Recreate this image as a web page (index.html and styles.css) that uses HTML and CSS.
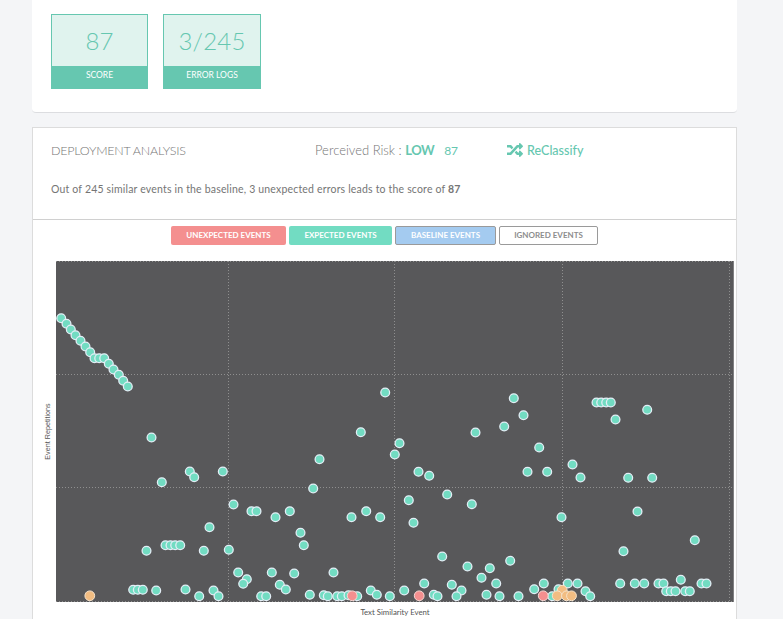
FILE: index.html
```html
<!DOCTYPE html>
<html>

<head>
<meta charset="utf-8">
<meta name="viewport" content="width=device-width, initial-scale=1">

<title>Deployment Analysis</title>

<link rel="stylesheet" href="styles.css">
</head>

<body>

	<div class="card top-card">
		<div class="tile">
			<div class="tile-value">87</div>
			<div class="tile-label">SCORE</div>
		</div>
		<div class="tile tile-wide">
			<div class="tile-value">3/245</div>
			<div class="tile-label">ERROR LOGS</div>
		</div>
	</div>

	<div class="card analysis">
		<div class="analysis-head">
			<div class="head-row">
				<span class="head-title">DEPLOYMENT ANALYSIS</span>
				<span class="head-risk">Perceived Risk : <b>LOW</b><span class="risk-num">87</span></span>
				<span class="head-action">
					<svg class="shuffle" viewBox="0 0 512 512"><path d="M504.971 359.029c9.373 9.373 9.373 24.569 0 33.941l-80 79.984c-15.01 15.01-40.971 4.49-40.971-16.971V416h-58.785a12.004 12.004 0 0 1-8.773-3.812l-70.556-75.596 53.333-57.143L352 336h32v-39.981c0-21.438 25.943-31.998 40.971-16.971l80 79.981zM12 176h84l52.781 56.551 53.333-57.143-70.556-75.596A11.999 11.999 0 0 0 122.785 96H12c-6.627 0-12 5.373-12 12v56c0 6.627 5.373 12 12 12zm372 0v39.984c0 21.46 25.961 31.98 40.971 16.971l80-79.984c9.373-9.373 9.373-24.569 0-33.941l-80-79.981C409.943 24.021 384 34.582 384 56.019V96h-58.785a12.004 12.004 0 0 0-8.773 3.812L96 336H12c-6.627 0-12 5.373-12 12v56c0 6.627 5.373 12 12 12h110.785c3.326 0 6.503-1.381 8.773-3.812L352 176h32z"/></svg>
					ReClassify
				</span>
			</div>
			<p class="summary">Out of 245 similar events in the baseline, 3 unexpected errors leads to the score of <b>87</b></p>
		</div>

		<div class="legend">
			<span class="pill pill-red">UNEXPECTED EVENTS</span>
			<span class="pill pill-green">EXPECTED EVENTS</span>
			<span class="pill pill-blue">BASELINE EVENTS</span>
			<span class="pill pill-white">IGNORED EVENTS</span>
		</div>

		<div class="chart">
			<div class="y-label"><span>Event Repetitions</span></div>
			<div class="plot-wrap">
				<svg class="plot" width="678" height="341" viewBox="56 261 678 341">
					<rect class="plot-bg" x="56" y="261" width="678" height="341"/>
					<path class="grid" d="M56 261.5H734M56 374.5H734M56 487.5H734M56 601.5H734M228.5 261V602M394.5 261V602M562.5 261V602M729.5 261V602"/>
					<path class="plot-edge" d="M733.5 261V602"/>
					<g id="dots" transform="translate(0.5 0.5)"></g>
				</svg>
				<div class="x-label">Text Similarity Event</div>
			</div>
		</div>
	</div>

	<script src="dots.js"></script>

</body>
</html>
```

FILE: styles.css
```css
* {
	box-sizing: border-box;
}

html, body {
	height: 619px;
	overflow: hidden;
}

body {
	margin: 0;
	padding: 0 46px 0 32px;
	background-color: #f4f5f7;
	font-family: "Lato", "Open Sans", sans-serif;
	color: #757575;
}

.card {
	background-color: #fff;
}

.top-card {
	display: flex;
	gap: 15px;
	height: 113px;
	padding: 14px 19px 0 19px;
	border-bottom: 1px solid #dcdde0;
	border-radius: 0 0 4px 4px;
}

.tile {
	width: 97px;
	height: 75px;
	text-align: center;
	border: 1px solid #66c7b0;
}

.tile-wide {
	width: 98px;
}

.tile-value {
	height: 51px;
	padding-top: 11px;
	background-color: #e0f3ee;
	color: #66c7b0;
	font-size: 24px;
	font-weight: 300;
	letter-spacing: 0.2px;
}

.tile-label {
	height: 23px;
	line-height: 18px;
	background-color: #66c7b0;
	color: #fff;
	font-size: 8.5px;
}

.analysis {
	margin-top: 14px;
	height: 492px;
	border: 1px solid #dcdcdc;
	border-bottom: 0;
}

.analysis-head {
	height: 92px;
	padding: 13px 18px 0 18px;
	border-bottom: 1px solid #d0d0d0;
}

.head-row {
	display: flex;
	align-items: center;
	height: 18px;
	font-size: 13px;
}

.head-title {
	width: 264px;
	font-size: 12.5px;
	font-weight: 300;
	letter-spacing: -0.25px;
}

.head-risk {
	width: 192px;
	font-weight: 300;
}

.head-risk b {
	color: #66c7b0;
	font-weight: 700;
	letter-spacing: -0.5px;
}

.risk-num {
	margin-left: 10px;
	color: #66c7b0;
	font-size: 12px;
	font-weight: 400;
}

.head-action {
	display: flex;
	align-items: center;
	gap: 4px;
	color: #66c7b0;
	font-size: 12.5px;
	font-weight: 500;
}

.shuffle {
	width: 16px;
	height: 16px;
	fill: #66c7b0;
}

.summary {
	margin: 24px 0 0 0;
	font-size: 10.5px;
	letter-spacing: 0.18px;
}

.legend {
	display: flex;
	justify-content: center;
	gap: 3px;
	padding: 6px 0 0 0;
}

.pill {
	height: 19px;
	line-height: 19px;
	text-align: center;
	font-size: 8px;
	font-weight: 700;
	color: #fff;
	border-radius: 2px;
}

.pill-red {
	width: 115px;
	background-color: #f48f8f;
}

.pill-green {
	width: 103px;
	background-color: #72dcc2;
}

.pill-blue {
	width: 101px;
	line-height: 17px;
	background-color: #a4cbf0;
	border: 1px solid #9a9a9a;
}

.pill-white {
	width: 99px;
	line-height: 17px;
	background-color: #fff;
	color: #8d8d8d;
	border: 1px solid #9a9a9a;
}

.chart {
	display: flex;
	margin-top: 16px;
}

.y-label {
	display: flex;
	align-items: center;
	justify-content: center;
	width: 23px;
	height: 341px;
	padding-left: 6px;
}

.y-label span {
	transform: rotate(-90deg);
	white-space: nowrap;
	font-family: "Liberation Sans", sans-serif;
	font-size: 7.2px;
	color: #555;
}

.plot {
	display: block;
}

.plot-bg {
	fill: #58585a;
}

.grid {
	fill: none;
	stroke: #8f8f8f;
	stroke-width: 1;
	stroke-dasharray: 1 2;
}

.plot-edge {
	fill: none;
	stroke: #808082;
	stroke-width: 1;
}

.dot {
	stroke: #e3eef6;
	stroke-width: 1.3;
}

.dot-green {
	fill: #72dcc2;
}

.dot-red {
	fill: #f48f8f;
	stroke: #f6d8d4;
	stroke-width: 1;
}

.dot-orange {
	fill: #f2bd82;
	stroke: #f6e3cc;
	stroke-width: 1;
}

.x-label {
	margin-top: 5px;
	text-align: center;
	font-size: 7.8px;
	color: #555;
}
```

FILE: dots.js
```js
// x, y of each event on the plot
var expected = [
	[60.7,317.7],[66,323.3],[70.3,329],[75,334.7],[80,340.3],[85,346],[89.7,351.7],[94,357.7],[98.7,357.7],[103.7,357.7],
	[108.3,363.3],[113,369],[118.3,374.3],[122.7,380.3],[127.3,386],[151,437],[189.3,471],[193.7,476.7],[222.3,471],[161.3,481.7],
	[233,504],[251,510.7],[256,510.7],[275,516.7],[209,526.7],[165,544.7],[170,544.7],[174.7,544.7],[179.7,544.7],[146,550.3],
	[203.3,550.3],[228.3,549.3],[237.7,572],[271.3,572],[246.3,578.7],[242.7,583.3],[279.3,584.3],[132.7,589.3],[137.3,589.3],[142.3,589.3],
	[155.7,590],[185,589],[213,590],[198.7,595.7],[218,595.7],[260.7,595.7],[265.7,595.7],
	[360.3,431.7],[475,432],[399,442.7],[394.3,454],[319,458.7],[418,471.3],[428.7,475.3],[527,471.3],[312.7,488],
	[446.7,494],[408.3,499.7],[471.3,503.7],[289.3,510.7],[365.7,510.7],[351,516.7],[379.7,516.7],[413,522.3],[300,532.3],[303.3,544.7],
	[441.7,556],[509.7,560.3],[467,566],[489.3,567.7],[293.7,573],[333,572],[481,577.3],[423.7,583],[451.3,584.3],[495.7,583],
	[285.3,589],[370.3,590],[403.7,590],[461,590],[309.3,594.3],[323.3,594.7],[327.3,595.7],[336.7,595.7],[341.3,595.7],[348,594.7],
	[356.7,595.7],[376.3,594.3],[389.3,595.7],[433.3,594.3],[437,595.7],[456,595.7],[486,594.3],[499,595.7],[518,595.7],
	[538.7,447],[572,464],[546.7,471.3],[580,477],[627.7,477.3],[651.7,477.3],[637,511],[561,516.7],[694.3,539.7],[623,550.7],
	[680.3,579.3],[543.3,583],[533.7,588.7],[567.3,583],[577,583],[619.7,583],[634.3,583],[643.7,583],[658,583],[663,583],
	[701,583],[706,583],[665.7,590.7],[670.3,590.7],[675,590.7],[684.7,590.7],[689.3,590.7],[585,590.7],[589.7,595.7],[558,588.7],
	[551.7,595.7],[596,402],[600.7,402],[605.7,402],[610.3,402],[646.7,409.3],[615,419],[384.7,392],[513.3,397.7],[523,414.7],[503.7,426]
];
var unexpected = [[351.7,595.3],[418.7,595.3],[542.7,595.3]];
var baseline = [[89.3,595.3],[561.7,589.7],[556.7,595.3],[566,595.3],[571,595.3]];

function write_dots(array, cls, r) {
	var str = "";
	for (var i = 0; i < array.length; i++) {
		str += "<circle class='dot " + cls + "' cx='" + array[i][0] + "' cy='" + array[i][1] + "' r='" + r + "'/>";
	}
	return str;
}

document.getElementById("dots").innerHTML =
	write_dots(expected, "dot-green", 4.4) + write_dots(unexpected, "dot-red", 4.9) + write_dots(baseline, "dot-orange", 4.9);
```
